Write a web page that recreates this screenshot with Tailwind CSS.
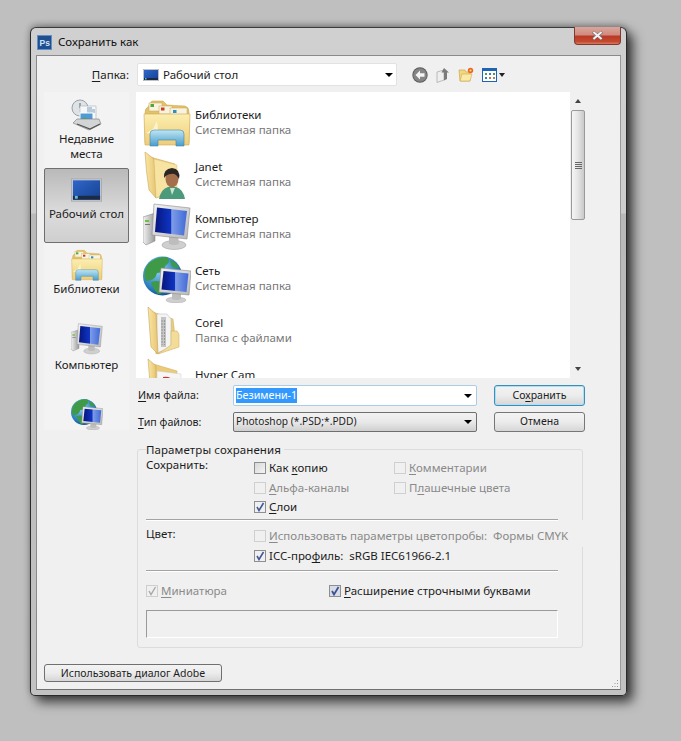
<!DOCTYPE html>
<html lang="ru">
<head>
<meta charset="utf-8">
<title>Сохранить как</title>
<script src="https://cdn.jsdelivr.net/npm/@tailwindcss/browser@4"></script>
</head>
<body class="bg-[#bfbfbf] h-screen overflow-hidden font-['Noto_Sans','DejaVu_Sans',sans-serif] text-[11.5px] text-[#1c1c1c]">

<!-- shared icons -->
<svg class="absolute w-0 h-0">
  <defs>
    <linearGradient id="folderG" x1="0" y1="0" x2="0" y2="1"><stop offset="0" stop-color="#fbeeb0"/><stop offset="1" stop-color="#efcd78"/></linearGradient>
    <linearGradient id="spineG" x1="0" y1="0" x2="1" y2="0"><stop offset="0" stop-color="#f9e7a4"/><stop offset="1" stop-color="#e8c572"/></linearGradient>
    <linearGradient id="screenG" x1="0" y1="0" x2="1" y2="0"><stop offset="0" stop-color="#06167e"/><stop offset="0.5" stop-color="#0f35c4"/><stop offset="0.52" stop-color="#7f9ce6"/><stop offset="1" stop-color="#3f6ad8"/></linearGradient>
    <linearGradient id="deskG" x1="0" y1="0" x2="1" y2="1"><stop offset="0" stop-color="#2f67c9"/><stop offset="1" stop-color="#164191"/></linearGradient>
    <radialGradient id="globeG" cx="0.4" cy="0.35" r="0.7"><stop offset="0" stop-color="#8fd0f2"/><stop offset="0.7" stop-color="#2a7fbe"/><stop offset="1" stop-color="#0f4a85"/></radialGradient>
    <linearGradient id="archG" x1="0" y1="0" x2="0" y2="1"><stop offset="0" stop-color="#bfe6f3"/><stop offset="1" stop-color="#4a9ccb"/></linearGradient>
    <linearGradient id="caseG" x1="0" y1="0" x2="1" y2="0"><stop offset="0" stop-color="#f2f2f2"/><stop offset="1" stop-color="#9a9a9a"/></linearGradient>
    <linearGradient id="frameG" x1="0" y1="0" x2="1" y2="1"><stop offset="0" stop-color="#f4f4f4"/><stop offset="1" stop-color="#b8b8b8"/></linearGradient>

    <symbol id="i-lib" viewBox="0 0 48 48">
      <path d="M2 14 Q2 9 5 8 L8 3 Q8 2 10 2 L20 2 L24 6 L42 7 Q46 8 46 13 V44 H2Z" fill="#e3c26a" stroke="#c7a24f" stroke-width=".5"/>
      <rect x="6" y="4" width="13" height="8" fill="#f7f3df" stroke="#c9a95a" stroke-width=".5"/><rect x="7.500" y="5" width="3.500" height="3" fill="#4fa83a"/>
      <rect x="16" y="7" width="13" height="8" fill="#f7f3df" stroke="#c9a95a" stroke-width=".5"/><rect x="18" y="8.500" width="3.500" height="3" fill="#d03a24"/>
      <rect x="27" y="9" width="17" height="8" fill="#f7f3df" stroke="#c9a95a" stroke-width=".5"/><rect x="30" y="11" width="3.500" height="3" fill="#2f8fc4"/>
      <path d="M1 15 H47 L46 46 H2Z" fill="url(#folderG)" stroke="#d0a850" stroke-width=".6"/>
      <path d="M10 30 L14 22 L15 31 L22 33 L14 34 L12 42 L10 35 L3 34Z" fill="#fffbe0" opacity=".75"/>
      <path d="M7 47 V35 Q7 31 11 31 H37 Q41 31 41 35 V47 H33 V41 H15 V47Z" fill="url(#archG)" stroke="#3f86ad" stroke-width=".6"/>
    </symbol>

    <symbol id="i-user" viewBox="0 0 48 48">
      <path d="M4 5 L32 13 V40 L13 47Z" fill="#eccb78" stroke="#c9a65c" stroke-width=".5"/>
      <path d="M2 1 L11 8 Q12 26 13 47 L6 39 Q3 20 2 1Z" fill="url(#spineG)" stroke="#c9a65c" stroke-width=".6"/>
      <path d="M11 8 L34 14 V38 L13 47Z" fill="#f7e3a2" stroke="#d6b566" stroke-width=".4"/>
      <path d="M16 48 Q18 38 25 36 L33 36 Q40 38 42 48Z" fill="#4b9a7c"/>
      <path d="M27 37 L29 44 L32 37Z" fill="#c7e6d4"/>
      <ellipse cx="29" cy="28" rx="6.500" ry="8.500" fill="#a66f4c"/>
      <path d="M21 27 Q20 18 29 17 Q38 18 36 28 Q33 22 28 23 Q24 23 21 27Z" fill="#2b2622"/>
    </symbol>

    <symbol id="i-pc" viewBox="0 0 48 48">
      <ellipse cx="31" cy="42" rx="12" ry="4.500" fill="#cfcfcf" stroke="#9b9b9b" stroke-width=".5"/>
      <path d="M26 32 H35 L36 41 Q31 43 26 41Z" fill="#bdbdbd"/>
      <path d="M0 14 L12 10 V38 L3 42 L0 39Z" fill="url(#caseG)" stroke="#7c7c7c" stroke-width=".5"/>
      <rect x="2" y="17" width="4" height="2" fill="#6cc23c"/><rect x="2" y="21" width="5" height="1" fill="#777"/>
      <path d="M11 1 L47 5 L44 36 L9 32Z" fill="url(#frameG)" stroke="#8b8b8b" stroke-width=".6"/>
      <path d="M14 4.500 L44 8 L41 32.500 L12 29Z" fill="url(#screenG)"/>
    </symbol>

    <symbol id="i-net" viewBox="0 0 48 48">
      <circle cx="19.500" cy="21" r="19.500" fill="url(#globeG)"/>
      <path d="M6 8 Q14 1 24 2 Q29 6 22 11 Q22 18 14 18 Q12 26 3 26 Q-1 16 6 8Z M8 27 Q18 24 22 31 Q21 39 15 39 Q10 34 8 27Z M27 5 Q34 7 36 13 L29 12Z" fill="#3f9a48"/>
      <ellipse cx="33" cy="45" rx="10" ry="3" fill="#cfcfcf" stroke="#a0a0a0" stroke-width=".4"/>
      <path d="M29 38 H38 V44 Q33 46 29 44Z" fill="#bdbdbd"/>
      <path d="M18 13 L48 16 L46 40 L16 37Z" fill="url(#frameG)" stroke="#8b8b8b" stroke-width=".6"/>
      <path d="M20.500 16 L45.500 18.500 L43.500 37 L18.500 34.500Z" fill="url(#screenG)"/>
    </symbol>

    <symbol id="i-folder" viewBox="0 0 48 48">
      <path d="M7 4 L30 12 L33 38 L13 47Z" fill="#eccb78" stroke="#c9a65c" stroke-width=".5"/>
      <path d="M14 7 H24 L28 12 V40 L14 46Z" fill="#f4f4f4" stroke="#bbb" stroke-width=".5"/>
      <path d="M18 10 H23 V40 H18Z" fill="#c4c4c4"/><path d="M19 13 V38 M21.500 13 V38" stroke="#8e8e8e" stroke-width=".8" stroke-dasharray="2 1"/>
      <path d="M5 0 L13 7 L15 47 L8 40Z" fill="url(#spineG)" stroke="#c9a65c" stroke-width=".6"/>
      <path d="M28 24 H34 L36 27 V40 L15 47 L28 38Z" fill="#f3dc98" stroke="#cda954" stroke-width=".5"/>
    </symbol>

    <symbol id="i-cam" viewBox="0 0 48 48">
      <path d="M7 4 L34 12 V48 H10Z" fill="#eccb78" stroke="#c9a65c" stroke-width=".5"/>
      <path d="M14 12 L38 15 V48 H14Z" fill="#f6f6f6" stroke="#ccc" stroke-width=".5"/>
      <path d="M20 18 Q30 16 35 29 L29 27 Q26 22 20 23Z" fill="#d2322a"/>
      <path d="M5 0 L13 7 V48 H9Z" fill="url(#spineG)" stroke="#c9a65c" stroke-width=".6"/>
    </symbol>

    <symbol id="i-recent" viewBox="0 0 32 32">
      <circle cx="9" cy="9" r="8" fill="#dfe3e6" stroke="#96a1a7" stroke-width="1"/>
      <path d="M9 4 V9 L13 11" fill="none" stroke="#5a666c" stroke-width="1"/>
      <path d="M9 7 H25 V21 H9Z" fill="#f6f7f8" stroke="#aab2b6" stroke-width=".6"/>
      <path d="M16 9 H21 M16 11 H24 M16 13 H24" stroke="#7d9fbd" stroke-width="1"/>
      <rect x="9" y="14" width="13" height="9" fill="#4f9bd4" stroke="#fff" stroke-width="1"/>
      <path d="M10 22 L14 18 L18 22Z" fill="#5fa34c"/>
      <path d="M2 24 L6 20 H28 L30 25 L18 31 Z" fill="#d2d4d6" stroke="#777" stroke-width=".6"/>
      <path d="M6 25 L19 30 L29 25" fill="none" stroke="#555" stroke-width="1.2"/>
    </symbol>

    <symbol id="i-desk" viewBox="0 0 32 24">
      <rect x=".5" y=".5" width="31" height="23" fill="#c9ccd0" stroke="#a8abb0"/>
      <rect x="2" y="2" width="28" height="20" fill="url(#deskG)"/>
      <rect x="2" y="18" width="28" height="4" fill="#1b2a45"/>
      <rect x="4" y="18" width="3" height="3" fill="#5ec0d8"/>
    </symbol>
  </defs>
</svg>

<!-- window -->
<div class="relative w-[597px] h-[669px] ml-[30px] mt-[27px] px-[5px] rounded-t-[6px] rounded-b-[5px] border border-[#2a2a2a] border-t-[#3a3a3a] bg-[linear-gradient(to_bottom,#d0d0d0_0,#cdcdcd_185px,#b9b9b9_186px,#c2c2c2_100%)] shadow-[6px_6px_12px_rgba(0,0,0,.7),0_-2px_6px_rgba(0,0,0,.3)]">

  <div class="flex items-center h-[27px] gap-[6px] pl-[1px] pt-[1px]">
    <svg class="w-[15px] h-[15px]" viewBox="0 0 15 15"><rect width="15" height="15" fill="#1f4f8f"/><rect x=".5" y=".5" width="14" height="14" fill="none" stroke="#5f8fc5"/><text x="2.600" y="11" font-size="8.500" font-family="Liberation Sans" font-weight="700" fill="#cfe4fa">Ps</text></svg>
    <span class="text-[#111]">Сохранить как</span>
  </div>

  <!-- close button -->
  <div class="absolute right-[5px] -top-[1px] w-[47px] h-[18px] rounded-b-[4px] border border-t-0 border-[#7e3a30] bg-[linear-gradient(to_bottom,#d9a59c_0,#d28b7f_45%,#b93a26_55%,#c4492f_85%,#d97a60_100%)] flex items-center justify-center">
    <svg class="w-[11px] h-[9px]" viewBox="0 0 12 10"><path d="M1 1 L11 9 M11 1 L1 9" stroke="#6e6e6e" stroke-width="3.400"/><path d="M1.500 1 L10.500 9 M10.500 1 L1.500 9" stroke="#f2f2f2" stroke-width="2.200"/></svg>
  </div>

  <!-- panel -->
  <div class="h-[635px] bg-[#f0f0f0] border border-[#8a8a8a] border-r-[#9a9a9a] border-b-[#6f6f6f] pt-[7px] pl-[7px] relative">

    <!-- folder row -->
    <div class="flex items-center h-[23px]">
      <div class="w-[85px] text-right"><u class="underline underline-offset-2">П</u>апка:</div>
      <div class="ml-[8px] w-[260px] h-[23px] bg-white border border-[#e2e2e2] rounded-[2px] flex items-center pl-[5px] relative">
        <svg class="w-[16px] h-[12px]"><use href="#i-desk"/></svg>
        <span class="ml-[4px]">Рабочий стол</span>
        <span class="absolute right-[3px] top-[9px] w-0 h-0 border-x-[4px] border-x-transparent border-t-[4px] border-t-black"></span>
      </div>
      <!-- toolbar -->
      <div class="ml-[15px] flex items-center">
        <svg class="w-[16px] h-[16px]" viewBox="0 0 16 16"><circle cx="8" cy="8" r="7.700" fill="#5a5a5a"/><circle cx="8" cy="8" r="6.800" fill="#858585"/><path d="M8 3.500 L3.500 8 L8 12.500 V9.700 H12.500 V6.300 H8Z" fill="#f4f4f4"/></svg>
        <svg class="ml-[8px] w-[14px] h-[16px]" viewBox="0 0 14 16"><path d="M1 5 L8 3 V13 L1 15.500Z" fill="#eeeeee" stroke="#a5a5a5" stroke-width=".7"/><path d="M8 1 L13 5.500 H11 V12 L8 13.500 V5.500 H5.500Z" fill="#7b7b7b"/></svg>
        <svg class="ml-[8px] w-[16px] h-[16px]" viewBox="0 0 16 16"><path d="M1 3 H7 L8 5 H12 V14 H2Z" fill="#f4d77c" stroke="#c9a755" stroke-width=".7"/><path d="M2 14 L4 7 H14 L12 14Z" fill="#fbe9a6" stroke="#c9a755" stroke-width=".6"/><circle cx="12.500" cy="3.500" r="2.700" fill="#ea6a1d"/><circle cx="12.500" cy="3.500" r="1" fill="#fbd9a0"/></svg>
        <svg class="ml-[8px] w-[15px] h-[14px]" viewBox="0 0 15 14"><rect x=".5" y=".5" width="14" height="13" fill="#fff" stroke="#1f63b5"/><rect x="1" y="1" width="13" height="2" fill="#1f63b5"/><rect x="3" y="5" width="2" height="2" fill="#4b9b55"/><rect x="7" y="5" width="2" height="2" fill="#3d7ac2"/><rect x="11" y="5" width="2" height="2" fill="#4b9b55"/><rect x="3" y="9" width="2" height="2" fill="#3d7ac2"/><rect x="7" y="9" width="2" height="2" fill="#c2753d"/><rect x="11" y="9" width="2" height="2" fill="#8a8a8a"/></svg>
        <span class="ml-[2px] w-0 h-0 border-x-[3.5px] border-x-transparent border-t-[4px] border-t-[#222]"></span>
      </div>
    </div>

    <div class="flex gap-[7px] mt-[6px]">
      <!-- places bar -->
      <div class="w-[85px] h-[338px] bg-[#f3f3f3] overflow-hidden text-center">
        <div class="h-[76px] pt-[7px] flex flex-col items-center">
          <svg class="w-[32px] h-[32px] shrink-0"><use href="#i-recent"/></svg>
          <div class="leading-[15px]">Недавние<br>места</div>
        </div>
        <div class="h-[75px] pt-[9px] flex flex-col items-center border border-[#6f6f6f] rounded-[2px] bg-[linear-gradient(to_bottom,#b9b9b9,#dcdcdc_60%,#cfcfcf)]">
          <svg class="w-[31px] h-[24px] shrink-0"><use href="#i-desk"/></svg>
          <div class="mt-[3px] whitespace-nowrap">Рабочий стол</div>
        </div>
        <div class="h-[75px] pt-[6px] flex flex-col items-center">
          <svg class="w-[32px] h-[32px] shrink-0"><use href="#i-lib"/></svg>
          <div class="mt-[-1px]">Библиотеки</div>
        </div>
        <div class="h-[75px] pt-[5px] flex flex-col items-center">
          <svg class="w-[32px] h-[32px] shrink-0"><use href="#i-pc"/></svg>
          <div class="mt-[1px]">Компьютер</div>
        </div>
        <div class="pt-[5px] flex flex-col items-center">
          <svg class="w-[32px] h-[32px] shrink-0"><use href="#i-net"/></svg>
        </div>
      </div>

      <div class="w-[449px]">
        <!-- file list + scrollbar -->
        <div class="flex h-[286px]">
          <div class="w-[434px] bg-white overflow-hidden pt-[5px] pl-[7px]">
            <div class="flex items-center h-[52px] gap-[4px]">
              <svg class="w-[48px] h-[48px] shrink-0"><use href="#i-lib"/></svg>
              <div class="leading-[15px] -mt-[2px]"><div>Библиотеки</div><div class="text-[#777]">Системная папка</div></div>
            </div>
            <div class="flex items-center h-[52px] gap-[4px]">
              <svg class="w-[48px] h-[48px] shrink-0"><use href="#i-user"/></svg>
              <div class="leading-[15px] -mt-[2px]"><div>Janet</div><div class="text-[#777]">Системная папка</div></div>
            </div>
            <div class="flex items-center h-[52px] gap-[4px]">
              <svg class="w-[48px] h-[48px] shrink-0"><use href="#i-pc"/></svg>
              <div class="leading-[15px] -mt-[2px]"><div>Компьютер</div><div class="text-[#777]">Системная папка</div></div>
            </div>
            <div class="flex items-center h-[52px] gap-[4px]">
              <svg class="w-[48px] h-[48px] shrink-0"><use href="#i-net"/></svg>
              <div class="leading-[15px] -mt-[2px]"><div>Сеть</div><div class="text-[#777]">Системная папка</div></div>
            </div>
            <div class="flex items-center h-[52px] gap-[4px]">
              <svg class="w-[48px] h-[48px] shrink-0"><use href="#i-folder"/></svg>
              <div class="leading-[15px] -mt-[2px]"><div>Corel</div><div class="text-[#777]">Папка с файлами</div></div>
            </div>
            <div class="flex items-center h-[52px] gap-[4px]">
              <svg class="w-[48px] h-[48px] shrink-0"><use href="#i-cam"/></svg>
              <div class="leading-[15px] -mt-[2px]"><div>Hyper Cam</div><div class="text-[#777]">Папка с файлами</div></div>
            </div>
          </div>
          <div class="w-[15px] flex flex-col items-center bg-[#f0f0f0]">
            <span class="mt-[7px] w-0 h-0 border-x-[3.5px] border-x-transparent border-b-[4px] border-b-[#444]"></span>
            <div class="mt-[7px] w-[14px] h-[110px] ml-[1px] border border-[#999] rounded-[2px] bg-[linear-gradient(to_right,#f5f5f5,#e6e6e6_45%,#c9c9c9)] flex flex-col items-center justify-center gap-[1px]">
              <i class="block w-[7px] h-px bg-[#666]"></i><i class="block w-[7px] h-px bg-[#666]"></i><i class="block w-[7px] h-px bg-[#666]"></i><i class="block w-[7px] h-px bg-[#666]"></i>
            </div>
            <span class="mt-auto mb-[7px] w-0 h-0 border-x-[3.5px] border-x-transparent border-t-[4px] border-t-[#444]"></span>
          </div>
        </div>

        <!-- file name -->
        <div class="flex items-center mt-[7px] h-[21px] text-[10.7px]">
          <div class="w-[97px] pl-[2px]"><u class="underline underline-offset-2">И</u>мя файла:</div>
          <div class="w-[244px] h-[21px] bg-white border border-[#a9cde6] rounded-[2px] flex items-center pl-[2px] relative">
            <span class="bg-[#3399ff] text-white leading-[15px]">Безимени-1</span>
            <span class="absolute right-[4px] top-[8px] w-0 h-0 border-x-[4px] border-x-transparent border-t-[4px] border-t-black"></span>
          </div>
          <button class="ml-[17px] w-[91px] h-[21px] text-[10.5px] border border-[#3f8db5] rounded-[3px] shadow-[inset_0_0_0_1px_#a9e2f7] bg-[linear-gradient(to_bottom,#f3f3f3,#ececec_50%,#d6d6d6)]">Со<u class="underline underline-offset-2">х</u>ранить</button>
        </div>

        <!-- file type -->
        <div class="flex items-center mt-[6px] h-[20px] text-[10.7px]">
          <div class="w-[97px] pl-[2px]"><u class="underline underline-offset-2">Т</u>ип файлов:</div>
          <div class="w-[244px] h-[20px] border border-[#6f6f6f] rounded-[2px] flex items-center pl-[2px] relative bg-[linear-gradient(to_bottom,#f2f2f2,#e9e9e9_50%,#cfcfcf)]">
            <span class="text-[10.2px]">Photoshop (*.PSD;*.PDD)</span>
            <span class="absolute right-[4px] top-[7px] w-0 h-0 border-x-[4px] border-x-transparent border-t-[4px] border-t-black"></span>
          </div>
          <button class="ml-[17px] w-[91px] h-[20px] text-[10.5px] border border-[#777] rounded-[3px] bg-[linear-gradient(to_bottom,#f3f3f3,#ececec_50%,#d6d6d6)]">Отмена</button>
        </div>

        <!-- save options -->
        <div class="relative ml-[1px] mt-[17px] w-[446px] h-[199px] border border-[#dcdcdc] rounded-[3px] pt-[7px] pl-[8px]">
          <div class="absolute -top-[8px] left-[8px] bg-[#f0f0f0] pr-[3px] leading-[16px] tracking-[.1px]">Параметры сохранения</div>
          <div class="absolute -right-[2px] top-[70px] w-[4px] h-[27px] bg-[#f0f0f0]"></div>

          <div class="flex">
            <div class="w-[108px] leading-[16px]">Сохранить:</div>
            <div class="w-[140px]">
              <div class="flex items-center h-[20px] gap-[3px] pt-[2px]">
                <span class="w-[12px] h-[12px] border border-[#8e8f8f] bg-[linear-gradient(135deg,#d8d8d8,#f4f4f4)]"></span><span>Как <u class="underline underline-offset-2">к</u>опию</span>
              </div>
              <div class="flex items-center h-[20px] gap-[3px] pt-[1px] text-[#8a8a8a]">
                <span class="w-[12px] h-[12px] border border-[#cfcfcf]"></span><span><u class="underline underline-offset-2">А</u>льфа-каналы</span>
              </div>
              <div class="flex items-center h-[19px] gap-[3px]">
                <span class="w-[12px] h-[12px] border border-[#8e8f8f] bg-[#eef0f4] flex"><svg viewBox="0 0 10 10"><path d="M2 5 L4 8.500 L8.500 1" fill="none" stroke="#44598f" stroke-width="1.600"/></svg></span><span><u class="underline underline-offset-2">С</u>лои</span>
              </div>
            </div>
            <div class="text-[#8a8a8a]">
              <div class="flex items-center h-[20px] gap-[3px] pt-[2px]">
                <span class="w-[12px] h-[12px] border border-[#cfcfcf]"></span><span><u class="underline underline-offset-2">К</u>омментарии</span>
              </div>
              <div class="flex items-center h-[20px] gap-[3px] pt-[1px]">
                <span class="w-[12px] h-[12px] border border-[#cfcfcf]"></span><span>П<u class="underline underline-offset-2">л</u>ашечные цвета</span>
              </div>
            </div>
          </div>

          <div class="w-[412px] mt-[3px] h-[2px] border-t border-[#a3a3a3] border-b border-b-white"></div>

          <div class="flex mt-[5px]">
            <div class="w-[108px] leading-[16px]">Цвет:</div>
            <div>
              <div class="flex items-center h-[20px] gap-[3px] text-[#8a8a8a] whitespace-nowrap">
                <span class="w-[12px] h-[12px] border border-[#cfcfcf]"></span><span><u class="underline underline-offset-2">И</u>спользовать параметры цветопробы:&nbsp; Формы CMYK</span>
              </div>
              <div class="flex items-center h-[20px] gap-[3px]">
                <span class="w-[12px] h-[12px] border border-[#8e8f8f] bg-[#eef0f4] flex"><svg viewBox="0 0 10 10"><path d="M2 5 L4 8.500 L8.500 1" fill="none" stroke="#44598f" stroke-width="1.600"/></svg></span><span>ICC-про<u class="underline underline-offset-2">ф</u>иль:&nbsp; sRGB IEC61966-2.1</span>
              </div>
            </div>
          </div>

          <div class="w-[412px] mt-[4px] h-[2px] border-t border-[#a3a3a3] border-b border-b-white"></div>

          <div class="flex mt-[9px] h-[20px] items-center">
            <div class="w-[183px] flex items-center gap-[3px] text-[#8a8a8a]">
              <span class="w-[12px] h-[12px] border border-[#cfcfcf] flex"><svg viewBox="0 0 10 10"><path d="M2 5 L4 8.500 L8.500 1" fill="none" stroke="#a8a8a8" stroke-width="1.400"/></svg></span><span><u class="underline underline-offset-2">М</u>иниатюра</span>
            </div>
            <div class="flex items-center gap-[3px]">
              <span class="w-[12px] h-[12px] border border-[#8e8f8f] bg-[#d9dce6] flex"><svg viewBox="0 0 10 10"><path d="M2 5 L4 8.500 L8.500 1" fill="none" stroke="#3c5295" stroke-width="1.800"/></svg></span><span><u class="underline underline-offset-2">Р</u>асширение строчными буквами</span>
            </div>
          </div>

          <div class="w-[412px] h-[28px] mt-[9px] border border-t-[#9a9a9a] border-l-[#9a9a9a] border-r-white border-b-white"></div>
        </div>
      </div>
    </div>

    <button class="block mt-[16px] ml-0 w-[178px] h-[18px] text-[10.5px] border border-[#707070] rounded-[3px] bg-[linear-gradient(to_bottom,#f3f3f3,#ececec_50%,#d6d6d6)] leading-[14px]">Использовать диалог Adobe</button>

    <!-- resize grip -->
    <svg class="absolute right-[1px] bottom-[1px] w-[9px] h-[9px]" viewBox="0 0 9 9"><path d="M7 1h1v1H7z M4.500 4h1v1h-1z M7 4h1v1H7z M2 7h1v1H2z M4.500 7h1v1h-1z M7 7h1v1H7z" fill="#9a9a9a"/></svg>
  </div>
</div>
</body>
</html>
